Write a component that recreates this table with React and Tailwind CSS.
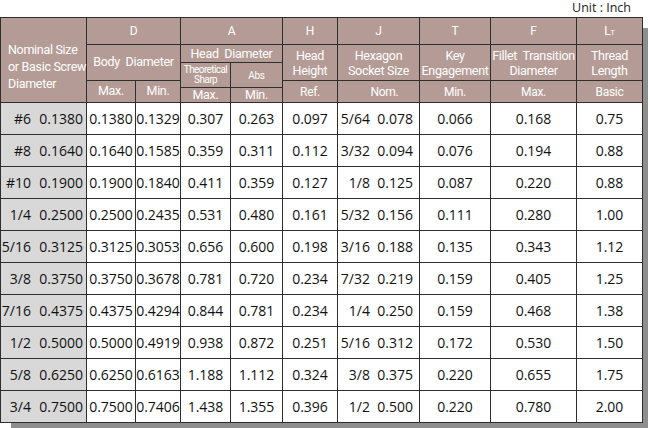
const rows = [
  ["#6", "0.1380", "0.1380", "0.1329", "0.307", "0.263", "0.097", "5/64", "0.078", "0.066", "0.168", "0.75"],
  ["#8", "0.1640", "0.1640", "0.1585", "0.359", "0.311", "0.112", "3/32", "0.094", "0.076", "0.194", "0.88"],
  ["#10", "0.1900", "0.1900", "0.1840", "0.411", "0.359", "0.127", "1/8", "0.125", "0.087", "0.220", "0.88"],
  ["1/4", "0.2500", "0.2500", "0.2435", "0.531", "0.480", "0.161", "5/32", "0.156", "0.111", "0.280", "1.00"],
  ["5/16", "0.3125", "0.3125", "0.3053", "0.656", "0.600", "0.198", "3/16", "0.188", "0.135", "0.343", "1.12"],
  ["3/8", "0.3750", "0.3750", "0.3678", "0.781", "0.720", "0.234", "7/32", "0.219", "0.159", "0.405", "1.25"],
  ["7/16", "0.4375", "0.4375", "0.4294", "0.844", "0.781", "0.234", "1/4", "0.250", "0.159", "0.468", "1.38"],
  ["1/2", "0.5000", "0.5000", "0.4919", "0.938", "0.872", "0.251", "5/16", "0.312", "0.172", "0.530", "1.50"],
  ["5/8", "0.6250", "0.6250", "0.6163", "1.188", "1.112", "0.324", "3/8", "0.375", "0.220", "0.655", "1.75"],
  ["3/4", "0.7500", "0.7500", "0.7406", "1.438", "1.355", "0.396", "1/2", "0.500", "0.220", "0.780", "2.00"],
];

// header cell: mauve fill, white text
const hd = "bg-[#b49b95] text-white flex items-center justify-center text-center whitespace-nowrap [font-family:Roboto,sans-serif] tracking-[-0.3px]";
const td = "bg-white flex items-center justify-center text-[14px]";

export default function App() {
  return (
    <div className="w-[650px] h-[428px] bg-white overflow-hidden text-[#111] [font-family:'Open_Sans',sans-serif]">
      <div className="h-[17px] text-right pr-[19px] text-[12.5px] leading-[15px] text-[#222]">Unit : Inch</div>
      <div className="w-[643px] shadow-[8px_8px_0_-3px_#8e8e8e]">
        <div className="grid bg-[#2e2e2e] p-px gap-px grid-cols-[85px_48px_44px_49px_51px_54px_81px_70px_85px_65px] grid-rows-[26px_17px_17px_6px_14px_repeat(10,31px)]">
          <div className={`${hd} row-span-5 !justify-start text-left pl-[7px] pt-[13px] text-[12.5px] leading-[17px]`}>
            Nominal Size<br />or Basic Screw<br />Diameter
          </div>
          <div className={`${hd} col-span-2 text-[12px]`}>D</div>
          <div className={`${hd} col-span-2 text-[12px]`}>A</div>
          <div className={`${hd} text-[12px]`}>H</div>
          <div className={`${hd} text-[12px]`}>J</div>
          <div className={`${hd} text-[12px]`}>T</div>
          <div className={`${hd} text-[12px]`}>F</div>
          <div className={`${hd} text-[12px]`}>
            L<span className="text-[8px] leading-none relative top-[2px]">T</span>
          </div>

          <div className={`${hd} col-span-2 row-span-2 whitespace-pre text-[12.5px]`}>Body  Diameter</div>
          <div className={`${hd} col-span-2 whitespace-pre text-[12.5px] leading-[16px]`}>Head  Diameter</div>
          <div className={`${hd} row-span-2 text-[12.5px] leading-[15px]`}>Head<br />Height</div>
          <div className={`${hd} row-span-2 text-[12.5px] leading-[15px]`}>Hexagon<br />Socket Size</div>
          <div className={`${hd} row-span-2 text-[12.5px] leading-[15px]`}>Key<br />Engagement</div>
          <div className={`${hd} row-span-2 whitespace-pre text-[12.5px] leading-[15px]`}>{"Fillet  Transition\nDiameter"}</div>
          <div className={`${hd} row-span-2 text-[12.5px] leading-[15px]`}>Thread<br />Length</div>

          <div className={`${hd} row-span-2 text-[10px] leading-[10px] !tracking-[-0.6px]`}>Theoretical<br />Sharp</div>
          <div className={`${hd} row-span-2 text-[10px]`}>Abs</div>

          <div className={`${hd} row-span-2 text-[12.5px]`}>Max.</div>
          <div className={`${hd} row-span-2 text-[12.5px]`}>Min.</div>
          <div className={`${hd} row-span-2 text-[12px]`}>Ref.</div>
          <div className={`${hd} row-span-2 pl-[12px] text-[12px]`}>Nom.</div>
          <div className={`${hd} row-span-2 text-[12px]`}>Min.</div>
          <div className={`${hd} row-span-2 text-[12px]`}>Max.</div>
          <div className={`${hd} row-span-2 text-[12px]`}>Basic</div>

          <div className={`${hd} text-[12.5px] leading-[14px]`}>Max.</div>
          <div className={`${hd} text-[12.5px] leading-[14px]`}>Min.</div>

          {rows.map((r) => (
            <div key={r[0]} className="contents">
              <div className="bg-[#d8d8d8] flex items-center text-[14px]">
                <span className="w-[30px] text-right">{r[0]}</span>
                <span className="flex-1 text-right pr-[3px]">{r[1]}</span>
              </div>
              <div className={td}>{r[2]}</div>
              <div className={td}>{r[3]}</div>
              <div className={td}>{r[4]}</div>
              <div className={td}>{r[5]}</div>
              <div className={td}>{r[6]}</div>
              <div className="bg-white flex items-center text-[14px]">
                <span className="w-[32px] text-right">{r[7]}</span>
                <span className="flex-1 text-right pr-[6px]">{r[8]}</span>
              </div>
              <div className={td}>{r[9]}</div>
              <div className={td}>{r[10]}</div>
              <div className={td}>{r[11]}</div>
            </div>
          ))}
        </div>
      </div>
    </div>
  );
}
